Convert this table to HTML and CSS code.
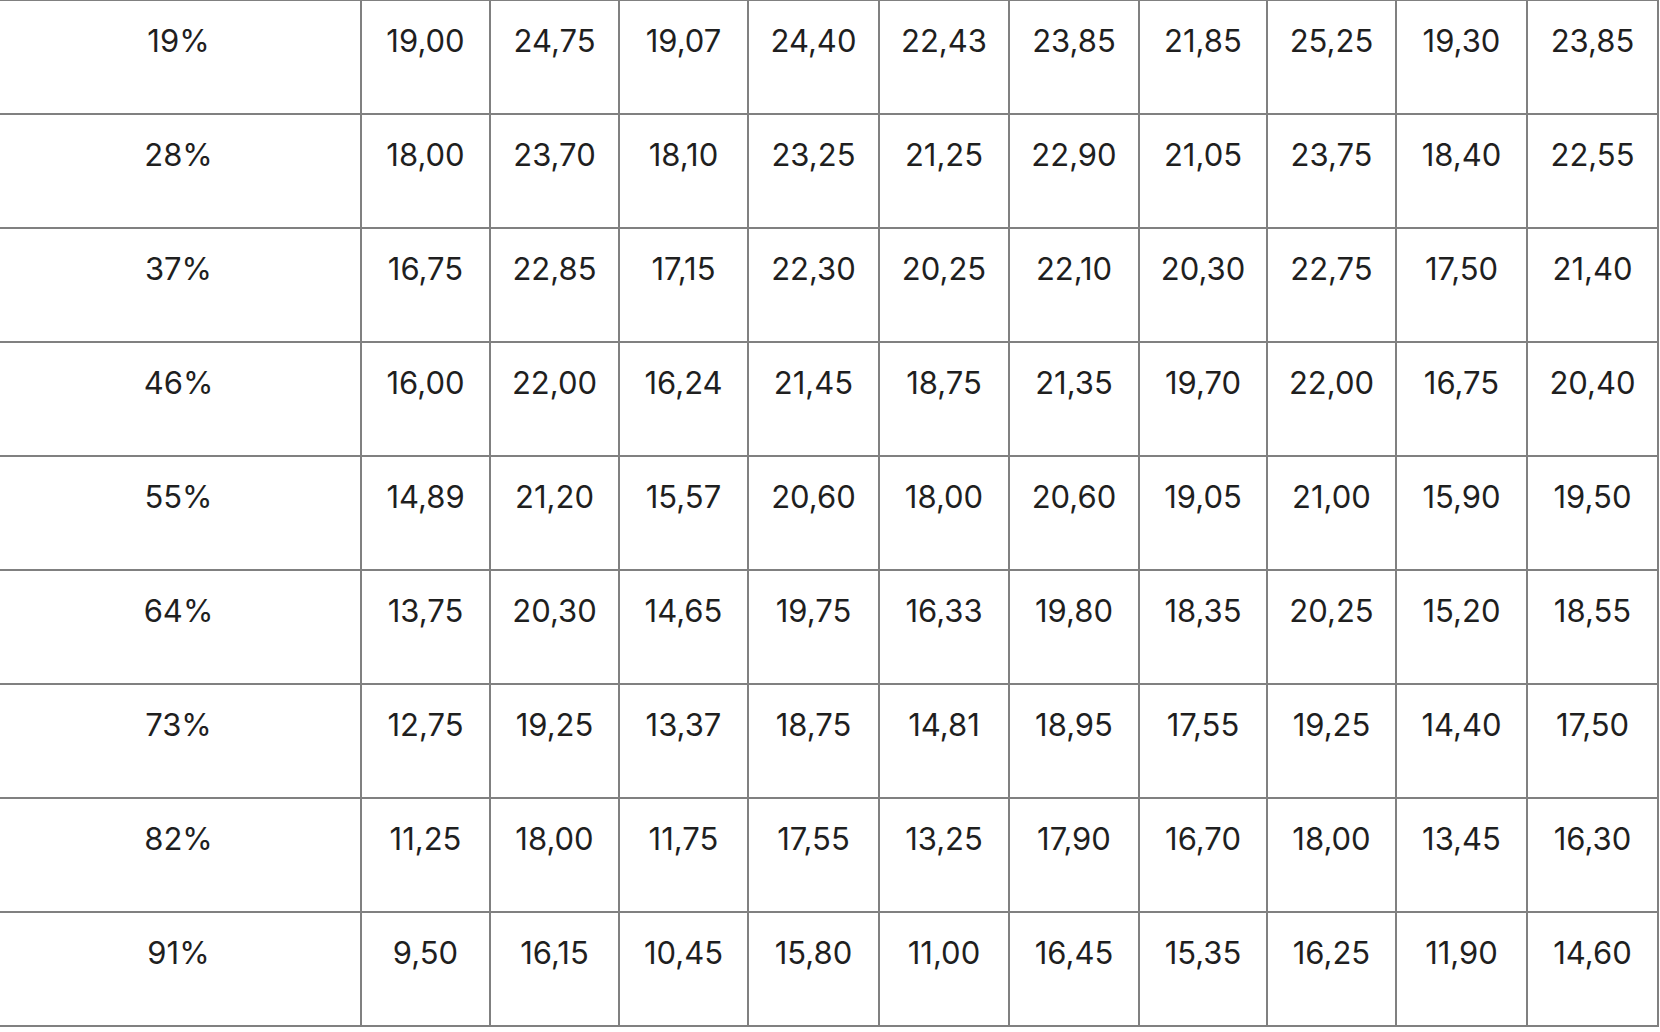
FILE: index.html
```html
<!DOCTYPE html>
<html>
<head>
<meta charset="utf-8">
<link rel="stylesheet" href="styles.css">
</head>
<body>
<table class="grid">
  <colgroup>
    <col class="c-first">
    <col class="c-129"><col class="c-129"><col class="c-129"><col class="c-131">
    <col class="c-130"><col class="c-130"><col class="c-128"><col class="c-129">
    <col class="c-131"><col class="c-131">
  </colgroup>
  <tbody>
    <tr><td>19%</td><td>19,00</td><td>24,75</td><td>19,07</td><td>24,40</td><td>22,43</td><td>23,85</td><td>21,85</td><td>25,25</td><td>19,30</td><td>23,85</td></tr>
    <tr><td>28%</td><td>18,00</td><td>23,70</td><td>18,10</td><td>23,25</td><td>21,25</td><td>22,90</td><td>21,05</td><td>23,75</td><td>18,40</td><td>22,55</td></tr>
    <tr><td>37%</td><td>16,75</td><td>22,85</td><td>17,15</td><td>22,30</td><td>20,25</td><td>22,10</td><td>20,30</td><td>22,75</td><td>17,50</td><td>21,40</td></tr>
    <tr><td>46%</td><td>16,00</td><td>22,00</td><td>16,24</td><td>21,45</td><td>18,75</td><td>21,35</td><td>19,70</td><td>22,00</td><td>16,75</td><td>20,40</td></tr>
    <tr><td>55%</td><td>14,89</td><td>21,20</td><td>15,57</td><td>20,60</td><td>18,00</td><td>20,60</td><td>19,05</td><td>21,00</td><td>15,90</td><td>19,50</td></tr>
    <tr><td>64%</td><td>13,75</td><td>20,30</td><td>14,65</td><td>19,75</td><td>16,33</td><td>19,80</td><td>18,35</td><td>20,25</td><td>15,20</td><td>18,55</td></tr>
    <tr><td>73%</td><td>12,75</td><td>19,25</td><td>13,37</td><td>18,75</td><td>14,81</td><td>18,95</td><td>17,55</td><td>19,25</td><td>14,40</td><td>17,50</td></tr>
    <tr><td>82%</td><td>11,25</td><td>18,00</td><td>11,75</td><td>17,55</td><td>13,25</td><td>17,90</td><td>16,70</td><td>18,00</td><td>13,45</td><td>16,30</td></tr>
    <tr><td>91%</td><td>9,50</td><td>16,15</td><td>10,45</td><td>15,80</td><td>11,00</td><td>16,45</td><td>15,35</td><td>16,25</td><td>11,90</td><td>14,60</td></tr>
  </tbody>
</table>
</body>
</html>
```

FILE: styles.css
```css
html, body {
  margin: 0;
  padding: 0;
  background: #ffffff;
  overflow: hidden;
}

.grid {
  border-collapse: collapse;
  table-layout: fixed;
  width: 1662px;
  margin-left: -5px;
  margin-top: -1px;
  font-family: Inter, "Noto Sans", sans-serif;
  font-size: 31px;
  color: #1f1f1f;
}

.c-first { width: 365px; }
.c-128 { width: 128px; }
.c-129 { width: 129px; }
.c-130 { width: 130px; }
.c-131 { width: 131px; }

.grid td {
  border: 2px solid #808080;
  height: 114px;
  padding: 17px 0 0 0;
  box-sizing: border-box;
  vertical-align: top;
  text-align: center;
  line-height: 45px;
  white-space: nowrap;
}
```
